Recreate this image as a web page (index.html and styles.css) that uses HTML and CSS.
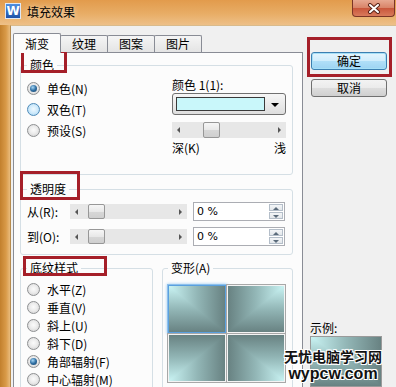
FILE: index.html
```html
<!DOCTYPE html>
<html lang="zh-CN">
<head>
    <meta charset="UTF-8">
    <meta name="viewport" content="width=device-width, initial-scale=1.0">
    <title>填充效果</title>
    <link rel="stylesheet" href="styles.css">
</head>
<body>
    <div class="window">
        <div class="titlebar">
            <span class="app-icon">W</span>
            <span class="title">填充效果</span>
            <span class="close-btn">
                <svg width="14" height="11" viewBox="0 0 14 11">
                    <path d="M3 2 L11 9 M11 2 L3 9" stroke="#5a2418" stroke-width="4" stroke-linecap="round"/>
                    <path d="M3 2 L11 9 M11 2 L3 9" stroke="#fff" stroke-width="2" stroke-linecap="round"/>
                </svg>
            </span>
        </div>

        <div class="frame">
            <div class="frame-side"></div>
            <div class="client">
                <div class="sheet">
                    <div class="tabs">
                        <div class="tab active">渐变</div>
                        <div class="tab">纹理</div>
                        <div class="tab">图案</div>
                        <div class="tab">图片</div>
                    </div>

                    <div class="panel">
                        <fieldset class="group group-color">
                            <legend class="mark mark-color">颜色</legend>
                            <div class="radio-list">
                                <label class="radio checked"><span class="dot"></span>单色(N)</label>
                                <label class="radio hover"><span class="dot"></span>双色(T)</label>
                                <label class="radio"><span class="dot"></span>预设(S)</label>
                            </div>
                            <div class="color-pick">
                                <div class="caption">颜色 1(1):</div>
                                <div class="combo">
                                    <span class="swatch"></span>
                                    <span class="combo-arrow"></span>
                                </div>
                                <div class="slider slider-color">
                                    <span class="arrow arrow-l"></span>
                                    <span class="thumb" style="margin-left: 19px"></span>
                                    <span class="arrow arrow-r"></span>
                                </div>
                                <div class="range-labels"><span>深(K)</span><span>浅</span></div>
                            </div>
                        </fieldset>

                        <fieldset class="group group-alpha">
                            <legend class="mark mark-alpha">透明度</legend>
                            <div class="alpha-row">
                                <span class="alpha-label">从(R):</span>
                                <div class="slider slider-alpha">
                                    <span class="arrow arrow-l"></span>
                                    <span class="thumb" style="margin-left: 6px"></span>
                                    <span class="arrow arrow-r"></span>
                                </div>
                                <div class="spin">
                                    <span class="spin-value">0 %</span>
                                    <span class="spin-btns"><span class="spin-up"></span><span class="spin-down"></span></span>
                                </div>
                            </div>
                            <div class="alpha-row">
                                <span class="alpha-label">到(O):</span>
                                <div class="slider slider-alpha">
                                    <span class="arrow arrow-l"></span>
                                    <span class="thumb" style="margin-left: 6px"></span>
                                    <span class="arrow arrow-r"></span>
                                </div>
                                <div class="spin">
                                    <span class="spin-value">0 %</span>
                                    <span class="spin-btns"><span class="spin-up"></span><span class="spin-down"></span></span>
                                </div>
                            </div>
                        </fieldset>

                        <div class="group-row">
                            <fieldset class="group group-style">
                                <legend class="mark mark-style">底纹样式</legend>
                                <label class="radio small"><span class="dot"></span>水平(Z)</label>
                                <label class="radio small"><span class="dot"></span>垂直(V)</label>
                                <label class="radio small"><span class="dot"></span>斜上(U)</label>
                                <label class="radio small"><span class="dot"></span>斜下(D)</label>
                                <label class="radio small checked"><span class="dot"></span>角部辐射(F)</label>
                                <label class="radio small"><span class="dot"></span>中心辐射(M)</label>
                            </fieldset>
                            <fieldset class="group group-variant">
                                <legend>变形(A)</legend>
                                <div class="tiles">
                                    <div class="tile tl selected"></div>
                                    <div class="tile tr"></div>
                                    <div class="tile bl"></div>
                                    <div class="tile br"></div>
                                </div>
                            </fieldset>
                        </div>
                    </div>
                </div>

                <div class="side">
                    <div class="btn btn-default mark-ok">确定</div>
                    <div class="btn btn-cancel">取消</div>
                    <div class="sample-label">示例:</div>
                    <div class="sample tile tl"></div>
                </div>
            </div>
        </div>

        <div class="watermark">
            <div class="wm-cn">无忧电脑学习网</div>
            <div class="wm-en">wypcw.com</div>
        </div>
    </div>
</body>
</html>
```

FILE: styles.css
```css
:root {
    --client: #f0f0f0;
    --panel: #fcfcfc;
    --tab-border: #898c95;
    --group-border: #d5dfe5;
    --mark: #a51f29;
    --tile-light: #c9f3f3;
    --tile-mid: #93b7b7;
    --tile-dark: #688282;
}

* {
    margin: 0;
    padding: 0;
    box-sizing: border-box;
}

body {
    font-family: "Noto Sans CJK SC", "DejaVu Sans", sans-serif;
    font-size: 12px;
    color: #000;
    background: var(--client);
}

.window {
    position: relative;
    width: 396px;
    height: 387px;
    overflow: hidden;
    display: flex;
    flex-direction: column;
}

/* title bar */
.titlebar {
    height: 25px;
    flex-shrink: 0;
    display: flex;
    align-items: flex-start;
    background: linear-gradient(to bottom, #e29b4c 0%, #e8ad66 55%, #eec088 100%);
}

.app-icon {
    width: 16px;
    height: 16px;
    margin: 3px 0 0 5px;
    border: 1px solid #dfe8f5;
    background: linear-gradient(to bottom, #4f8fe0, #1f52a8);
    color: #fff;
    font-family: "DejaVu Sans", sans-serif;
    font-weight: bold;
    font-size: 12px;
    line-height: 14px;
    text-align: center;
}

.title {
    margin: 5px 0 0 6px;
    line-height: 14px;
    text-shadow: 0 0 6px rgba(255, 240, 220, 0.9);
}

.close-btn {
    margin-left: auto;
    margin-right: 1px;
    width: 43px;
    height: 17px;
    border: 1px solid #7b3526;
    border-top: none;
    border-radius: 0 0 4px 4px;
    background: linear-gradient(to bottom, #e7a891 0%, #d98469 48%, #c9573c 52%, #d97a5b 100%);
    display: flex;
    align-items: center;
    justify-content: center;
}

/* frame + client */
.frame {
    flex: 1;
    display: flex;
    min-height: 0;
}

.frame-side {
    width: 10px;
    background: linear-gradient(to right, #c2802d 0%, #d99a48 60%, #e9bb7c 100%);
}

.client {
    flex: 1;
    display: flex;
    background: var(--client);
    border-top: 1px solid #d9bb8c;
    border-left: 1px solid #b58a4e;
    padding: 7px 0 0 2px;
    overflow: hidden;
}

.sheet {
    width: 290px;
    flex-shrink: 0;
}

/* tabs */
.tabs {
    display: flex;
    align-items: flex-start;
    height: 20px;
    margin-bottom: -1px;
    position: relative;
    z-index: 1;
}

.tab {
    width: 48px;
    height: 17px;
    margin-top: 2px;
    margin-left: -1px;
    border: 1px solid var(--tab-border);
    border-bottom: none;
    border-radius: 2px 2px 0 0;
    background: linear-gradient(to bottom, #f5f5f5, #e4e4e4);
    text-align: center;
    line-height: 16px;
}

.tab.active {
    height: 20px;
    margin-top: 0;
    margin-left: 0;
    position: relative;
    z-index: 2;
    background: var(--panel);
    line-height: 19px;
}

.panel {
    height: 360px;
    background: var(--panel);
    border: 1px solid var(--tab-border);
    padding-top: 5px;
}

/* group boxes */
.group {
    border: 1px solid var(--group-border);
    border-radius: 3px;
    margin: 0 9px 0 6px;
    min-width: 0;
}

.group legend {
    padding: 0 3px;
    line-height: 14px;
}

.group-color {
    display: flex;
    justify-content: space-between;
    padding: 6px 6px 19px;
}

.group-alpha {
    margin-top: 7px;
    padding: 3px 6px 5px;
}

.group-row {
    display: flex;
    gap: 9px;
    margin: 6px 9px 0 6px;
}

.group-row .group {
    margin: 0;
}

.group-style {
    width: 133px;
    padding: 5px 6px 20px;
}

.group-variant {
    flex: 1;
    padding: 10px 5px 20px;
}

/* hand-drawn red annotation boxes */
.mark {
    position: relative;
}

.mark::after {
    content: "";
    position: absolute;
    border: 3px solid var(--mark);
}

.mark-color::after {
    top: -8px;
    left: -6px;
    right: -10px;
    bottom: -1px;
}

.mark-alpha::after {
    top: -11px;
    left: -7px;
    right: -11px;
    bottom: -4px;
}

.mark-style::after {
    top: -5px;
    left: -4px;
    right: -26px;
    bottom: -1px;
}

/* radio buttons */
.radio {
    display: flex;
    align-items: center;
    gap: 7px;
    height: 21px;
}

.radio.small {
    height: 18px;
}

.dot {
    width: 13px;
    height: 13px;
    border-radius: 50%;
    border: 1px solid #8e9092;
    background: radial-gradient(circle at 50% 45%, #fbfbfb 0%, #ececec 45%, #cdcdcd 100%);
    position: relative;
    flex-shrink: 0;
}

.radio.hover .dot {
    border-color: #4f8ab8;
    background: radial-gradient(circle at 50% 45%, #f0f9ff 0%, #cfeafb 50%, #9fd1f0 100%);
}

.radio.checked .dot::after {
    content: "";
    position: absolute;
    inset: 2px;
    border-radius: 50%;
    background: radial-gradient(circle at 40% 35%, #a8d8f6 0%, #2f6fa3 50%, #173f63 100%);
}

/* colour picker column */
.color-pick {
    width: 114px;
}

.caption {
    line-height: 14px;
}

.combo {
    margin-top: 1px;
    height: 22px;
    display: flex;
    align-items: stretch;
    border: 1px solid #707070;
    border-radius: 3px;
    background: linear-gradient(to bottom, #f6f6f6, #dedede);
    padding: 3px 0 3px 3px;
}

.swatch {
    flex: 1;
    border: 1px solid #3a3a3a;
    background: #c9f7fa;
}

.combo-arrow {
    width: 20px;
    position: relative;
}

.combo-arrow::after {
    content: "";
    position: absolute;
    left: 6px;
    top: 6px;
    border-left: 4px solid transparent;
    border-right: 4px solid transparent;
    border-top: 4px solid #000;
}

/* scroll-style sliders */
.slider {
    display: flex;
    align-items: center;
    background: #e7e7e7;
    height: 16px;
}

.slider-color {
    margin-top: 7px;
}

.slider-alpha {
    width: 117px;
    height: 15px;
}

.arrow {
    width: 12px;
    height: 100%;
    position: relative;
}

.arrow::after {
    content: "";
    position: absolute;
    top: 50%;
    margin-top: -3px;
    border-top: 3px solid transparent;
    border-bottom: 3px solid transparent;
}

.arrow-l::after {
    left: 5px;
    border-right: 3px solid #555;
}

.arrow-r {
    margin-left: auto;
}

.arrow-r::after {
    left: 4px;
    border-left: 3px solid #555;
}

.thumb {
    width: 17px;
    height: 100%;
    border: 1px solid #979797;
    border-radius: 2px;
    background: linear-gradient(to bottom, #f6f6f6, #e8e8e8 50%, #d7d7d7 51%, #cfcfcf);
}

.range-labels {
    margin-top: 3px;
    display: flex;
    justify-content: space-between;
    line-height: 14px;
}

/* transparency rows */
.alpha-row {
    display: flex;
    align-items: center;
    height: 25px;
}

.alpha-label {
    width: 43px;
}

.spin {
    margin-left: 6px;
    width: 92px;
    height: 19px;
    display: flex;
    align-items: center;
    border: 1px solid #abadb3;
    background: #fff;
    padding: 1px;
}

.spin-value {
    flex: 1;
    padding-left: 2px;
    font-family: "DejaVu Sans", sans-serif;
    font-size: 11px;
}

.spin-btns {
    width: 14px;
    height: 100%;
    display: flex;
    flex-direction: column;
    gap: 1px;
}

.spin-up,
.spin-down {
    flex: 1;
    border: 1px solid #b4bec9;
    background: linear-gradient(to bottom, #f4f6f8, #e2e6ea);
    position: relative;
}

.spin-up::after,
.spin-down::after {
    content: "";
    position: absolute;
    left: 3px;
    top: 2px;
    border-left: 3px solid transparent;
    border-right: 3px solid transparent;
}

.spin-up::after {
    border-bottom: 3px solid #5b6b7b;
}

.spin-down::after {
    border-top: 3px solid #5b6b7b;
}

/* gradient variant tiles (rectangular corner gradient) */
.tiles {
    display: grid;
    grid-template-columns: 58px 58px;
    grid-auto-rows: 48px;
    column-gap: 1px;
    row-gap: 1px;
}

.tile {
    position: relative;
    border: 1px solid #f4f4f4;
    box-shadow: 0 0 0 1px #a8a8a8;
    overflow: hidden;
}

.tile::before {
    content: "";
    position: absolute;
    inset: 0;
}

.tile.tl {
    background: linear-gradient(to bottom, var(--tile-light), var(--tile-mid) 50%, var(--tile-dark));
}

.tile.tl::before {
    background: linear-gradient(to right, var(--tile-light), var(--tile-mid) 50%, var(--tile-dark));
    clip-path: polygon(0 0, 100% 0, 100% 100%);
}

.tile.tr {
    background: linear-gradient(to bottom, var(--tile-light), var(--tile-mid) 50%, var(--tile-dark));
}

.tile.tr::before {
    background: linear-gradient(to left, var(--tile-light), var(--tile-mid) 50%, var(--tile-dark));
    clip-path: polygon(0 0, 100% 0, 0 100%);
}

.tile.bl {
    background: linear-gradient(to top, var(--tile-light), var(--tile-mid) 50%, var(--tile-dark));
}

.tile.bl::before {
    background: linear-gradient(to right, var(--tile-light), var(--tile-mid) 50%, var(--tile-dark));
    clip-path: polygon(0 100%, 100% 0, 100% 100%);
}

.tile.br {
    background: linear-gradient(to top, var(--tile-light), var(--tile-mid) 50%, var(--tile-dark));
}

.tile.br::before {
    background: linear-gradient(to left, var(--tile-light), var(--tile-mid) 50%, var(--tile-dark));
    clip-path: polygon(0 0, 100% 100%, 0 100%);
}

.tile.selected {
    border-color: #5aa0df;
    box-shadow: 0 0 0 1px #8cc0ec, 0 0 3px 1px #9ccbf2;
}

/* right column */
.side {
    width: 76px;
    margin-left: 8px;
    padding-top: 19px;
    display: flex;
    flex-direction: column;
}

.btn {
    height: 20px;
    border: 1px solid #707070;
    border-radius: 3px;
    background: linear-gradient(to bottom, #f3f3f3 0%, #ebebeb 48%, #dddddd 52%, #cfcfcf 100%);
    display: flex;
    align-items: center;
    justify-content: center;
    line-height: 14px;
}

.btn-default {
    height: 21px;
    border-color: #3c7fb1;
    background: linear-gradient(to bottom, #e5f5fd 0%, #d0edfc 48%, #b0dff8 52%, #9dd3f2 100%);
    box-shadow: inset 0 0 0 1px #a6e0f7;
}

.btn-cancel {
    margin-top: 9px;
}

.mark-ok {
    position: relative;
}

.mark-ok::after {
    content: "";
    position: absolute;
    top: -16px;
    left: -5px;
    right: -6px;
    bottom: -8px;
    border: 3px solid var(--mark);
}

.sample-label {
    margin-top: 224px;
    margin-left: -1px;
    line-height: 14px;
}

.sample {
    margin-top: 1px;
    margin-left: -1px;
    width: 72px;
    height: 60px;
    border: 1px solid #9a9a9a;
    box-shadow: none;
}

/* site watermark over the corner */
.watermark {
    position: absolute;
    left: 284px;
    top: 348px;
    text-align: center;
    font-weight: bold;
    color: #111;
    text-shadow: -1px -1px 0 #fff, 1px -1px 0 #fff, -1px 1px 0 #fff, 1px 1px 0 #fff, 0 1px 0 #fff, 0 -1px 0 #fff;
}

.wm-cn {
    font-size: 14px;
    line-height: 17px;
}

.wm-en {
    font-family: "Liberation Sans", Arial, sans-serif;
    font-size: 16px;
    line-height: 17px;
}
```
